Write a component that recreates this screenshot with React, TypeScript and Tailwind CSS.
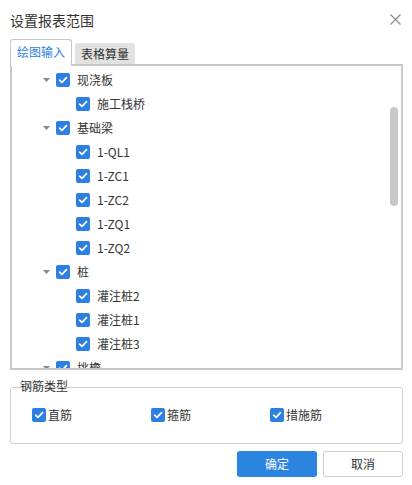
type Node = { label: string; level: 1 | 2 };

const treeRows: Node[] = [
  { label: "现浇板", level: 1 },
  { label: "施工栈桥", level: 2 },
  { label: "基础梁", level: 1 },
  { label: "1-QL1", level: 2 },
  { label: "1-ZC1", level: 2 },
  { label: "1-ZC2", level: 2 },
  { label: "1-ZQ1", level: 2 },
  { label: "1-ZQ2", level: 2 },
  { label: "桩", level: 1 },
  { label: "灌注桩2", level: 2 },
  { label: "灌注桩1", level: 2 },
  { label: "灌注桩3", level: 2 },
  { label: "挑檐", level: 1 },
];

const rebarTypes = ["直筋", "箍筋", "措施筋"];

const CheckBox = () => (
  <span className="w-[14px] h-[14px] rounded-[2px] bg-[#2d7fe3] flex items-center justify-center shrink-0">
    <svg width="10" height="10" viewBox="0 0 10 10" fill="none">
      <path d="M1.6 5.2 L4 7.4 L8.5 2.6" stroke="white" strokeWidth="1.7" strokeLinecap="round" strokeLinejoin="round" />
    </svg>
  </span>
);

const Caret = () => (
  <svg width="7" height="4" viewBox="0 0 7 4" className="shrink-0">
    <path d="M0 0 L7 0 L3.5 4 Z" fill="#8a8a8a" />
  </svg>
);

export default function App() {
  return (
    <div
      className="w-[412px] h-[485px] bg-white text-[#333] text-[12px] overflow-hidden"
      style={{ fontFamily: '"Noto Sans CJK SC", "Noto Sans", sans-serif' }}
    >
      {/* Title bar */}
      <div className="h-[39px] pl-[10px] pr-[11px] flex items-center justify-between">
        <span className="text-[14px] leading-none">设置报表范围</span>
        <svg width="11" height="11" viewBox="0 0 11 11" className="mt-[-1px]">
          <path d="M0.5 0.5 L10.5 10.5 M10.5 0.5 L0.5 10.5" stroke="#8a8a8a" strokeWidth="1.2" />
        </svg>
      </div>

      {/* Tabs */}
      <div className="h-[25px] pl-[10px] flex items-end">
        <div className="relative z-10 h-[27px] w-[62px] mb-[-2px] bg-white border border-b-0 border-[#c6c6c6] rounded-t-[3px] flex items-center justify-center text-[#2d7fe3] pb-[2px]">
          绘图输入
        </div>
        <div className="h-[21px] w-[60px] ml-[3px] bg-[#e2e2e2] rounded-t-[3px] flex items-center justify-center">
          表格算量
        </div>
      </div>

      {/* Tree panel */}
      <div className="relative ml-[10px] w-[393px] h-[306px] border-2 border-[#c8c8c8] overflow-hidden">
        <div className="pt-[2px]">
          {treeRows.map((row) => (
            <div key={row.label} className="h-[24px] flex items-center">
              {row.level === 1 ? (
                <>
                  <span className="w-[31px]" />
                  <Caret />
                  <span className="w-[6px]" />
                  <CheckBox />
                </>
              ) : (
                <>
                  <span className="w-[64px]" />
                  <CheckBox />
                </>
              )}
              <span className="ml-[7px] leading-none">{row.label}</span>
            </div>
          ))}
        </div>
        <div className="absolute right-[3px] top-[41px] w-[8px] h-[99px] rounded-full bg-[#c8c8c8]" />
      </div>

      {/* Rebar type group */}
      <div className="relative ml-[10px] mt-[17px] w-[393px] h-[57px] border border-[#d0d0d0] rounded-[3px]">
        <span className="absolute left-[9px] top-[-8px] leading-none text-[12px]">钢筋类型</span>
        <div className="flex pl-[21px] pt-[20px]">
          {rebarTypes.map((t) => (
            <label key={t} className="w-[119px] flex items-center gap-[2px]">
              <CheckBox />
              <span className="leading-none">{t}</span>
            </label>
          ))}
        </div>
      </div>

      {/* Footer buttons */}
      <div className="mt-[7px] pr-[9px] flex justify-end gap-[6px]">
        <button className="w-[80px] h-[26px] rounded-[3px] bg-[#2b84e0] text-white">确定</button>
        <button className="w-[80px] h-[26px] rounded-[3px] bg-white border border-[#cfcfcf] text-[#333]">取消</button>
      </div>
    </div>
  );
}
